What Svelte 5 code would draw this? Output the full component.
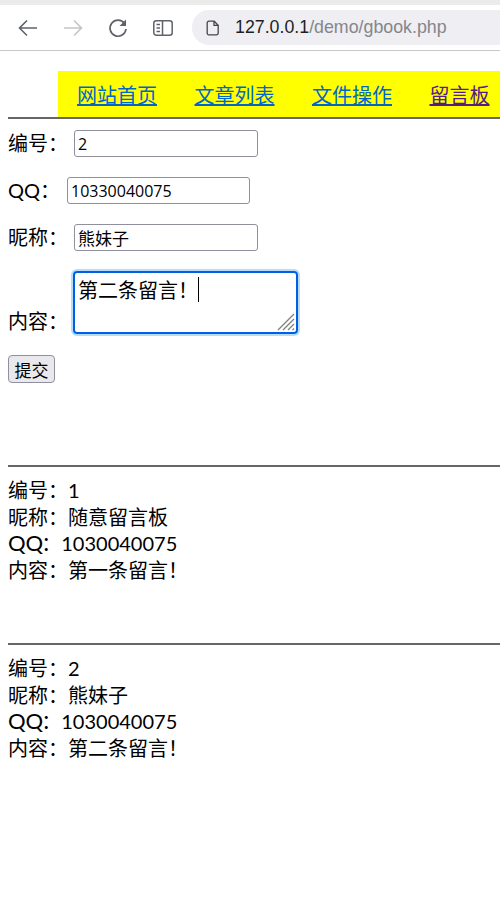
<script>
  let navItems = [
    { label: '网站首页' },
    { label: '文章列表' },
    { label: '文件操作' },
    { label: '留言板', visited: true },
  ]
  let messages = [
    { id: 1, name: '随意留言板', qq: '1030040075', text: '第一条留言！' },
    { id: 2, name: '熊妹子', qq: '1030040075', text: '第二条留言！' },
  ]
</script>

<div class="chrome">
  <button class="tool" aria-label="Back">
    <svg width="22" height="22" viewBox="0 0 22 22"><path d="M20 11H3M10 3.5 2.5 11l7.5 7.5" fill="none" stroke="#5f6368" stroke-width="1.6" /></svg>
  </button>
  <button class="tool" aria-label="Forward">
    <svg width="22" height="22" viewBox="0 0 22 22"><path d="M2 11h17M12 3.5l7.5 7.5-7.5 7.5" fill="none" stroke="#c4c5c8" stroke-width="1.6" /></svg>
  </button>
  <button class="tool" aria-label="Reload">
    <svg width="22" height="22" viewBox="0 0 22 22"><path d="M17.5 6.5A8 8 0 1 0 19 12" fill="none" stroke="#5f6368" stroke-width="1.7" /><path d="M19 2.5V9h-6.5z" fill="#5f6368" /></svg>
  </button>
  <button class="tool" aria-label="Side panel">
    <svg width="22" height="22" viewBox="0 0 22 22"><rect x="1.8" y="3.8" width="18.4" height="14.4" rx="2.5" fill="none" stroke="#5f6368" stroke-width="1.5" /><path d="M10.5 4v14" stroke="#5f6368" stroke-width="1.5" /><path d="M4.5 7.5h3.5M4.5 11h3.5M4.5 14.5h3.5" stroke="#5f6368" stroke-width="1.5" /></svg>
  </button>
  <div class="address">
    <svg width="14" height="16" viewBox="0 0 14 16"><path d="M2.8 1.2h5.4l4 4v8a1.6 1.6 0 0 1-1.6 1.6H2.8a1.6 1.6 0 0 1-1.6-1.6V2.8a1.6 1.6 0 0 1 1.6-1.6zM8 1.2v4.2h4.2" fill="none" stroke="#45474a" stroke-width="1.3" /></svg>
    <span class="url"><span class="host">127.0.0.1</span>/demo/gbook.php</span>
  </div>
</div>

<div class="page">
  <nav>
    {#each navItems as item}
      <a href="#top" class:visited={item.visited}>{item.label}</a>
    {/each}
  </nav>
  <hr />

  <form>
    <div class="row first">
      <label for="id">编号：</label>
      <input id="id" class="wide" value="2" />
    </div>
    <div class="row qq">
      <label for="qq">QQ：</label>
      <input id="qq" class="wide" value="10330040075" />
    </div>
    <div class="row third">
      <label for="nick">昵称：</label>
      <input id="nick" class="wide cjk" value="熊妹子" />
    </div>
    <div class="row content">
      <label for="body">内容：</label>
      <div class="textarea-box">
        <div class="textarea" id="body">第二条留言！<span class="caret"></span></div>
        <svg class="grip" width="18" height="18" viewBox="0 0 18 18"><path d="M17 1 1 17M17 6 6 17M17 11l-6 6M17 15.5 15.5 17" stroke="#808080" stroke-width="1.3" /></svg>
      </div>
    </div>
    <button class="submit" type="button">提交</button>
  </form>

  {#each messages as m}
    <section>
      <hr />
      <p>编号：{m.id}</p>
      <p>昵称：{m.name}</p>
      <p><span class="qq-mark">QQ</span>：{m.qq}</p>
      <p>内容：{m.text}</p>
    </section>
  {/each}
</div>

<style>
  :global(body) {
    margin: 0;
    background: #fff;
    font-family: "Lato", "Noto Sans CJK SC", sans-serif;
    color: #000;
  }
  .chrome {
    box-sizing: border-box;
    height: 51px;
    border-top: 5px solid #ebebeb;
    border-bottom: 1px solid #c9c9c9;
    background: #fff;
    display: flex;
    align-items: center;
    padding-left: 17px;
  }
  .tool {
    width: 22px;
    height: 22px;
    padding: 0;
    margin-right: 23px;
    border: 0;
    background: none;
    display: flex;
  }
  .tool:nth-child(4) {
    margin-right: 18px;
  }
  .address {
    flex: 1;
    height: 35px;
    background: #eeeef3;
    border-radius: 17px 0 0 17px;
    display: flex;
    align-items: center;
    gap: 15px;
    padding-left: 14px;
  }
  .url {
    font-family: "Liberation Sans", sans-serif;
    font-size: 17.8px;
    color: #85868a;
  }
  .host {
    color: #1f1f1f;
  }
  .page {
    padding-left: 8px;
  }
  nav {
    margin: 20px 0 0 50px;
    height: 46px;
    background: #ff0;
    display: flex;
    align-items: center;
    gap: 37.5px;
    padding-left: 19px;
    white-space: nowrap;
    font-family: "Noto Sans CJK SC", sans-serif;
    font-size: 20px;
  }
  nav a {
    color: #0066cc;
    text-decoration: underline;
  }
  nav a.visited {
    color: #551a8b;
  }
  hr {
    margin: 0;
    border: 0;
    height: 2px;
    background: #666;
  }
  .row {
    display: flex;
    font-size: 20px;
  }
  .row.first {
    margin-top: 11px;
    gap: 6px;
  }
  .row.qq {
    margin-top: 20px;
    gap: 5px;
  }
  .row.third {
    margin-top: 20px;
    gap: 6px;
  }
  .row.content {
    margin-top: 20px;
    align-items: flex-end;
    gap: 5px;
  }
  .row label {
    width: 60px;
    line-height: 26px;
    white-space: nowrap;
  }
  .row.qq label {
    width: 54px;
  }
  .qq-mark {
    font-size: 22px;
    line-height: 1;
    margin-right: -2px;
  }
  .wide {
    box-sizing: border-box;
    width: 184px;
    height: 27px;
    padding: 1px 3px;
    border: 1px solid #8f8f9d;
    border-radius: 3px;
    font-size: 16px;
    font-family: "Open Sans", "Noto Sans CJK SC", sans-serif;
    color: #000;
    background: #fff;
    outline: none;
  }
  #qq {
    width: 183px;
  }
  .wide.cjk {
    font-size: 17px;
  }
  .textarea-box {
    position: relative;
  }
  .textarea {
    box-sizing: border-box;
    width: 225px;
    height: 63px;
    border: 2px solid #0060df;
    border-radius: 4px;
    box-shadow: 0 0 0 2px #b5dcfb;
    padding: 4px 3px;
    font-size: 20px;
    line-height: 26px;
    font-family: "Noto Sans CJK SC", sans-serif;
    display: flex;
  }
  .caret {
    width: 1px;
    height: 25px;
    background: #000;
  }
  .grip {
    position: absolute;
    right: 3px;
    bottom: 3px;
  }
  .submit {
    display: block;
    box-sizing: border-box;
    width: 47px;
    height: 28px;
    margin-top: 21px;
    padding: 0;
    background: #e9e9ed;
    border: 1px solid #8f8f9d;
    border-radius: 4px;
    font-size: 17px;
    font-family: "Noto Sans CJK SC", sans-serif;
    color: #000;
  }
  form {
    height: 335px;
    margin: 0;
  }
  section {
    height: 178px;
    font-size: 20px;
  }
  section hr {
    margin-bottom: 10px;
  }
  section p {
    margin: 0;
    height: 26.5px;
    line-height: 26.5px;
    white-space: nowrap;
  }
</style>
